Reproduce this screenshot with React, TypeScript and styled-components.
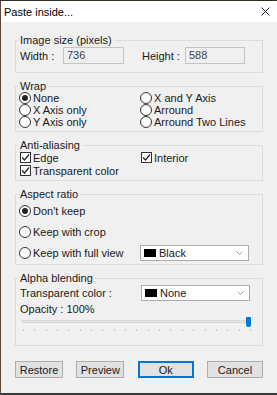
import React from 'react';
import styled, { createGlobalStyle } from 'styled-components';

const GlobalStyle = createGlobalStyle`
  html, body {
    margin: 0;
    padding: 0;
    background: #f0f0f0;
  }
  body {
    font-family: "Liberation Sans Narrow", "Liberation Sans", Arial, sans-serif;
    font-size: 11px;
    color: #1a1a1a;
  }
`;

const Window = styled.div`
  width: 277px;
  height: 395px;
  box-sizing: border-box;
  border-top: 1px solid #2f2c20;
  border-left: 1px solid #5a463a;
  border-bottom: 2px solid #3a3a3a;
  background: #f0f0f0;
  display: flex;
  flex-direction: column;
`;

const TitleBar = styled.div`
  height: 21px;
  flex: none;
  background: #fff;
  display: flex;
  align-items: center;
  justify-content: space-between;
  padding: 0 7px 0 3px;
  font-size: 11px;
  color: #000;
`;

const Body = styled.div`
  display: flex;
  flex-direction: column;
  gap: 7px;
  padding: 12px 14px 0 14px;
`;

const Group = styled.fieldset`
  margin: 0;
  padding: 0;
  min-width: 0;
  border: 1px solid #dcdcdc;
`;

const Legend = styled.legend`
  margin-left: 2px;
  padding: 0 2px;
  line-height: 12px;
`;

const SizeRow = styled.div`
  display: flex;
  align-items: center;
  padding: 1px 0 8px 4px;
`;

const FieldLabel = styled.span<{ $w: number; $ml?: number }>`
  width: ${(p) => p.$w}px;
  margin-left: ${(p) => p.$ml ?? 0}px;
`;

const ReadBox = styled.div<{ $w: number }>`
  width: ${(p) => p.$w}px;
  height: 17px;
  box-sizing: border-box;
  border: 1px solid #c4c4c4;
  background: #f0f0f0;
  color: #444;
  padding: 0 3px;
  line-height: 14px;
`;

const Grid = styled.div<{ $row: number; $pl: number; $pb: number }>`
  display: grid;
  grid-template-columns: 121px 1fr;
  grid-auto-rows: ${(p) => p.$row}px;
  padding: 0 0 ${(p) => p.$pb}px ${(p) => p.$pl}px;
`;

const Option = styled.label`
  display: flex;
  align-items: center;
  gap: 2px;
  white-space: nowrap;
`;

const RadioCircle = styled.span<{ $on?: boolean }>`
  width: 12px;
  height: 12px;
  box-sizing: border-box;
  border: 1px solid #333;
  border-radius: 50%;
  background: #fff;
  display: flex;
  align-items: center;
  justify-content: center;
  &::after {
    content: '';
    width: 6px;
    height: 6px;
    border-radius: 50%;
    background: ${(p) => (p.$on ? '#222' : 'transparent')};
  }
`;

const CheckBox = styled.span`
  width: 11px;
  height: 11px;
  box-sizing: border-box;
  border: 1px solid #333;
  background: #fff;
  display: flex;
  align-items: center;
  justify-content: center;
`;

const SelectBox = styled.div`
  width: 109px;
  height: 16px;
  box-sizing: border-box;
  align-self: center;
  border: 1px solid #acacac;
  background: #fff;
  display: flex;
  align-items: center;
  padding: 0 5px 0 3px;
  gap: 3px;
`;

const Swatch = styled.span`
  width: 12px;
  height: 8px;
  background: #000;
`;

const SelectText = styled.span`
  flex: 1;
`;

const AlphaBody = styled.div`
  display: flex;
  flex-direction: column;
  padding: 0 0 12px 4px;
`;

const AlphaRow = styled.div`
  display: grid;
  grid-template-columns: 121px 1fr;
  align-items: center;
  height: 18px;
  margin-left: -4px;
  padding-left: 4px;
`;

const OpacityLabel = styled.div`
  line-height: 12px;
  margin-top: 1px;
`;

const Slider = styled.div`
  position: relative;
  width: 229px;
  height: 18px;
  margin-left: 2px;
`;

const Track = styled.div`
  position: absolute;
  left: 0;
  right: 3px;
  top: 5px;
  height: 3px;
  box-sizing: border-box;
  border: 1px solid #d6d6d6;
  background: #e7e7e7;
`;

const Thumb = styled.div`
  position: absolute;
  top: 2px;
  width: 5px;
  height: 10px;
  background: #0078d7;
  border-radius: 1px 1px 2px 2px;
`;

const Ticks = styled.div`
  position: absolute;
  left: 1px;
  right: 0;
  top: 14px;
  display: flex;
  justify-content: space-between;
`;

const Tick = styled.span`
  width: 1px;
  height: 2px;
  background: #c4c4c4;
`;

const Buttons = styled.div`
  display: flex;
  justify-content: space-between;
  margin-top: 8px;
`;

const Button = styled.button<{ $w: number; $primary?: boolean }>`
  width: ${(p) => p.$w}px;
  height: 17px;
  box-sizing: border-box;
  padding: 0;
  font: inherit;
  color: #1a1a1a;
  background: #e1e1e1;
  border: 1px solid ${(p) => (p.$primary ? '#0078d7' : '#adadad')};
  box-shadow: ${(p) => (p.$primary ? 'inset 0 0 0 1px #0078d7' : 'none')};
`;

const Radio = ({ label, on }: { label: string; on?: boolean }) => (
  <Option>
    <RadioCircle $on={on} />
    {label}
  </Option>
);

const Check = ({ label }: { label: string }) => (
  <Option>
    <CheckBox>
      <svg width="9" height="9" viewBox="0 0 9 9">
        <polyline points="1,4.5 3.5,7 8,1.5" fill="none" stroke="#222" strokeWidth="1.2" />
      </svg>
    </CheckBox>
    {label}
  </Option>
);

const Select = ({ value }: { value: string }) => (
  <SelectBox>
    <Swatch />
    <SelectText>{value}</SelectText>
    <svg width="7" height="4" viewBox="0 0 7 4">
      <polyline points="0.5,0.5 3.5,3.5 6.5,0.5" fill="none" stroke="#9a9a9a" strokeWidth="1" />
    </svg>
  </SelectBox>
);

const App = () => {
  const opacity = 100;
  const ticks = Array.from({ length: 21 });

  return (
    <Window>
      <GlobalStyle />
      <TitleBar>
        <span>Paste inside...</span>
        <svg width="9" height="9" viewBox="0 0 9 9">
          <path d="M0.5 0.5 L8.5 8.5 M8.5 0.5 L0.5 8.5" stroke="#222" strokeWidth="1" />
        </svg>
      </TitleBar>
      <Body>
        <Group>
          <Legend>Image size (pixels)</Legend>
          <SizeRow>
            <FieldLabel $w={43}>Width :</FieldLabel>
            <ReadBox $w={61}>736</ReadBox>
            <FieldLabel $w={43} $ml={18}>Height :</FieldLabel>
            <ReadBox $w={60}>588</ReadBox>
          </SizeRow>
        </Group>

        <Group>
          <Legend>Wrap</Legend>
          <Grid $row={12} $pl={3} $pb={3}>
            <Radio label="None" on />
            <Radio label="X and Y Axis" />
            <Radio label="X Axis only" />
            <Radio label="Arround" />
            <Radio label="Y Axis only" />
            <Radio label="Arround Two Lines" />
          </Grid>
        </Group>

        <Group>
          <Legend>Anti-aliasing</Legend>
          <Grid $row={13} $pl={4} $pb={3}>
            <Check label="Edge" />
            <Check label="Interior" />
            <Check label="Transparent color" />
          </Grid>
        </Group>

        <Group>
          <Legend>Aspect ratio</Legend>
          <Grid $row={21} $pl={3} $pb={1}>
            <Radio label="Don't keep" on />
            <span />
            <Radio label="Keep with crop" />
            <span />
            <Radio label="Keep with full view" />
            <Select value="Black" />
          </Grid>
        </Group>

        <Group>
          <Legend>Alpha blending</Legend>
          <AlphaBody>
            <AlphaRow>
              <span>Transparent color :</span>
              <Select value="None" />
            </AlphaRow>
            <OpacityLabel>Opacity : {opacity}%</OpacityLabel>
            <Slider>
              <Track />
              <Thumb style={{ left: `calc(${opacity}% - 5px)` }} />
              <Ticks>
                {ticks.map((_, i) => (
                  <Tick key={i} />
                ))}
              </Ticks>
            </Slider>
          </AlphaBody>
        </Group>

        <Buttons>
          <Button $w={48}>Restore</Button>
          <Button $w={48}>Preview</Button>
          <Button $w={56} $primary>
            Ok
          </Button>
          <Button $w={56}>Cancel</Button>
        </Buttons>
      </Body>
    </Window>
  );
};

export default App;
